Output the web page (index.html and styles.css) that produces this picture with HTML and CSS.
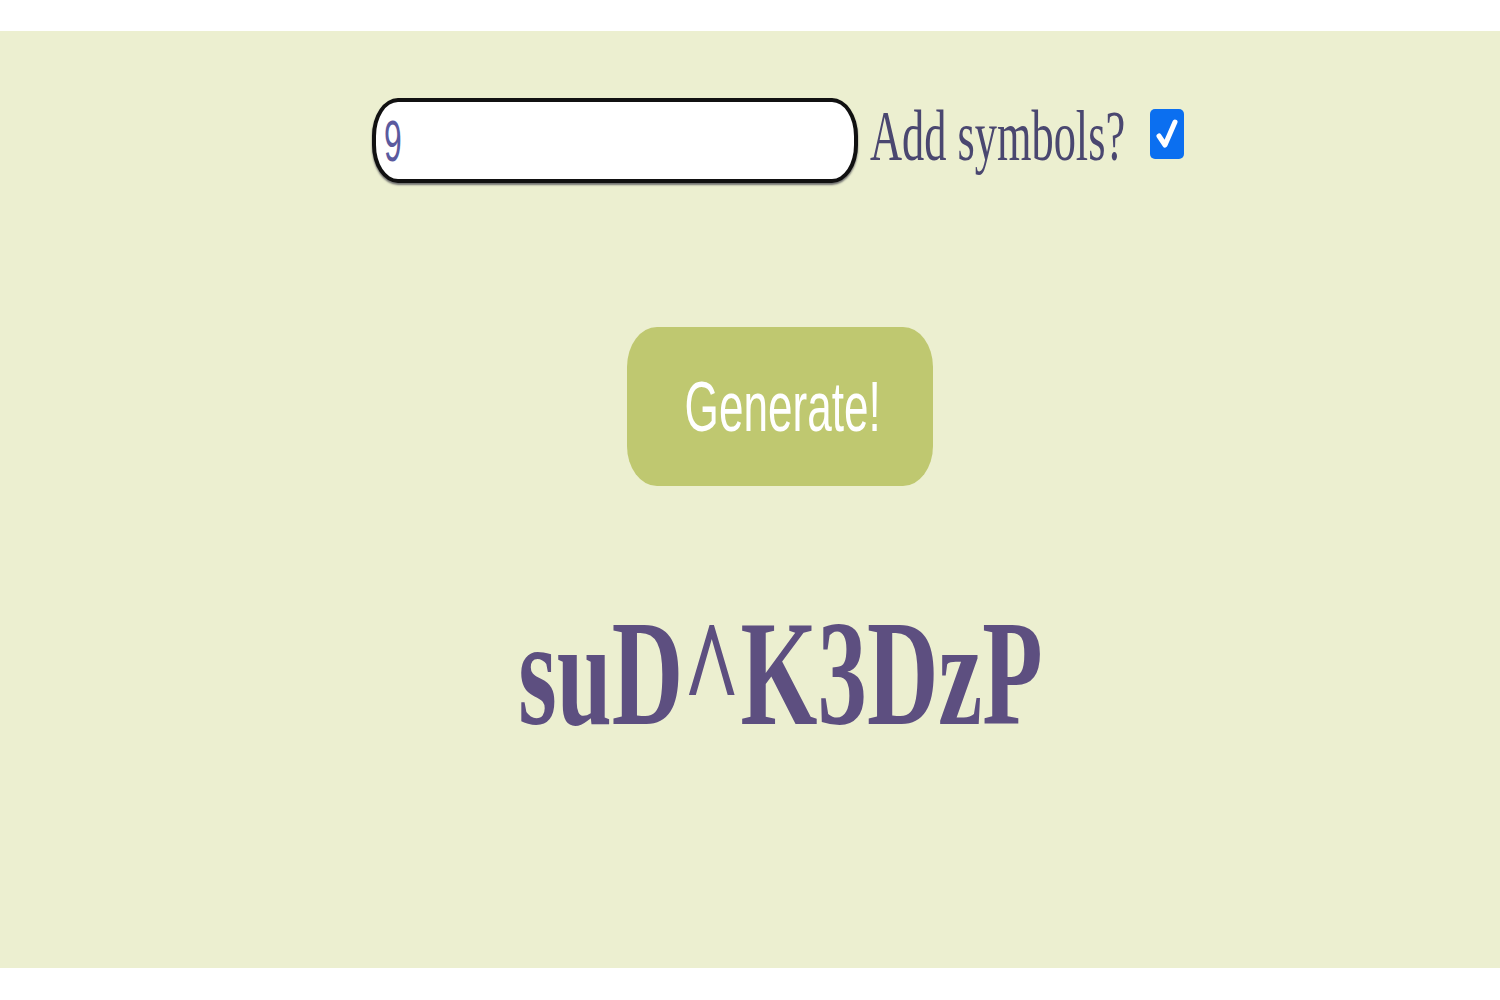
FILE: index.html
```html
<!DOCTYPE html>
<html lang="en">
<head>
  <meta charset="UTF-8">
  <title>Password Generator</title>
  <link rel="stylesheet" href="styles.css">
</head>
<body>
  <div class="pagina">
    <div class="fila">
      <div class="campo"><span class="num">9</span></div>
      <label class="etiqueta"><span>Add symbols?</span></label>
      <div class="check">
        <svg width="24" height="34" viewBox="0 0 24 34">
          <path d="M4 19 L10 28 L20 5" fill="none" stroke="#fff" stroke-width="5" stroke-linecap="round" stroke-linejoin="round"/>
        </svg>
      </div>
    </div>

    <button class="boton" type="button"><span>Generate!</span></button>

    <div class="resultado"><span>suD^K3DzP</span></div>
  </div>
</body>
</html>
```

FILE: styles.css
```css
body {
  margin: 0;
  background: #ffffff;
}
.pagina {
  margin-top: 31px;
  height: 937px;
  box-sizing: border-box;
  padding: 67px 0 0 60px;
  background: #ecefd0;
  display: flex;
  flex-direction: column;
  align-items: center;
}
.fila {
  display: flex;
  align-items: center;
  margin-left: -4px;
}
.campo {
  width: 486px;
  height: 85px;
  box-sizing: border-box;
  border: 4px solid #111;
  border-radius: 26px / 38px;
  background: #fff;
  box-shadow: 0 2px 2px #707070;
  padding-left: 8px;
  display: flex;
  align-items: center;
  overflow: hidden;
}
.num {
  display: inline-block;
  font-family: "Liberation Sans", Arial, sans-serif;
  font-size: 58px;
  line-height: 1;
  color: #5b5a9e;
  transform: scaleX(0.55);
  transform-origin: left center;
}
.etiqueta {
  width: 256px;
  margin-left: 12px;
  margin-bottom: 8px;
  white-space: nowrap;
}
.etiqueta span {
  display: inline-block;
  font-family: "Liberation Serif", "Times New Roman", serif;
  font-size: 71px;
  line-height: 1;
  color: #4a4770;
  transform: scaleX(0.625);
  transform-origin: left center;
}
.check {
  width: 34px;
  height: 50px;
  margin-left: 24px;
  margin-bottom: 14px;
  background: #0b6ff0;
  border-radius: 5px;
  display: flex;
  align-items: center;
  justify-content: center;
}
.boton {
  margin-top: 144px;
  width: 306px;
  height: 159px;
  border: none;
  border-radius: 30px / 40px;
  background: #bfc870;
  color: #fff;
  padding: 0;
  cursor: pointer;
}
.boton span {
  display: inline-block;
  font-family: "Liberation Sans", Arial, sans-serif;
  font-size: 70px;
  line-height: 1;
  transform: scaleX(0.63);
}
.resultado {
  margin-top: 112px;
  white-space: nowrap;
}
.resultado span {
  display: inline-block;
  font-family: "Liberation Serif", "Times New Roman", serif;
  font-weight: bold;
  font-size: 151px;
  line-height: 1;
  color: #5d4f80;
  transform: scaleX(0.655);
}
```
